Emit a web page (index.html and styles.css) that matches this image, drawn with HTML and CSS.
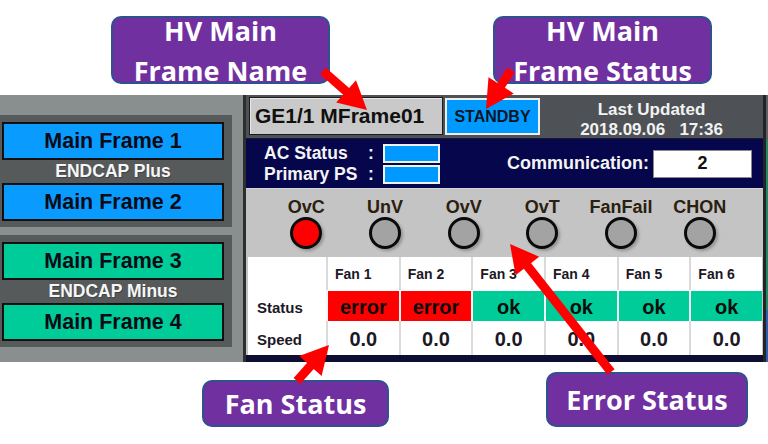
FILE: index.html
```html
<!DOCTYPE html>
<html>
<head>
<meta charset="utf-8">
<title>HV Main Frame</title>
<link rel="stylesheet" href="styles.css">
</head>
<body>
<div class="page">
  <div class="top-space"></div>
  <div class="shot">
    <div class="lp">
      <div class="group">
        <div class="mf blue">Main Frame 1</div>
        <div class="cap">ENDCAP Plus</div>
        <div class="mf blue">Main Frame 2</div>
      </div>
      <div class="group">
        <div class="mf green">Main Frame 3</div>
        <div class="cap">ENDCAP Minus</div>
        <div class="mf green">Main Frame 4</div>
      </div>
    </div>
    <div class="rp">
      <div class="hdr">
        <div class="name">GE1/1 MFrame01</div>
        <div class="standby">STANDBY</div>
        <div class="updated">
          <div>Last Updated</div>
          <div class="date">2018.09.06&nbsp;&nbsp; 17:36</div>
        </div>
      </div>
      <div class="navy">
        <div class="ps">
          <span class="pl">AC Status</span><span class="pc">:</span><span class="pb"></span>
          <span class="pl">Primary PS</span><span class="pc">:</span><span class="pb"></span>
        </div>
        <div class="comm"><span>Communication:</span><div class="cbox">2</div></div>
      </div>
      <div class="ind">
        <div class="led"><span>OvC</span><i class="dot on"></i></div>
        <div class="led"><span>UnV</span><i class="dot"></i></div>
        <div class="led"><span>OvV</span><i class="dot"></i></div>
        <div class="led"><span>OvT</span><i class="dot"></i></div>
        <div class="led"><span>FanFail</span><i class="dot"></i></div>
        <div class="led"><span>CHON</span><i class="dot"></i></div>
      </div>
      <div class="twrap">
        <div class="tbl">
          <div class="lab"></div>
          <div class="fh">Fan 1</div>
          <div class="fh">Fan 2</div>
          <div class="fh">Fan 3</div>
          <div class="fh">Fan 4</div>
          <div class="fh">Fan 5</div>
          <div class="fh">Fan 6</div>
          <div class="lab st">Status</div>
          <div class="fs err">error</div>
          <div class="fs err">error</div>
          <div class="fs ok">ok</div>
          <div class="fs ok">ok</div>
          <div class="fs ok">ok</div>
          <div class="fs ok">ok</div>
          <div class="lab sp">Speed</div>
          <div class="fv">0.0</div>
          <div class="fv">0.0</div>
          <div class="fv">0.0</div>
          <div class="fv">0.0</div>
          <div class="fv">0.0</div>
          <div class="fv">0.0</div>
        </div>
      </div>
      <div class="bbar"></div>
    </div>
    <div class="strip"></div>
  </div>

  <div class="callout c-name"><div class="ct">HV Main<br>Frame Name</div></div>
  <div class="callout c-status"><div class="ct">HV Main<br>Frame Status</div></div>
  <div class="callout c-fan"><div class="ct">Fan Status</div></div>
  <div class="callout c-err"><div class="ct">Error Status</div></div>

  <svg class="arrows" width="768" height="444" viewBox="0 0 768 444">
    <g fill="#ff0000" stroke="#ff0000">
      <line x1="323" y1="71" x2="347.6" y2="92.7" stroke-width="9"/>
      <polygon points="367,110 336.2,102.6 356,80.2" stroke="none"/>
      <line x1="511" y1="70" x2="500" y2="87.1" stroke-width="9"/>
      <polygon points="486,109 488.5,77.3 513.7,93.5" stroke="none"/>
      <line x1="611" y1="372" x2="526.2" y2="264.4" stroke-width="9"/>
      <polygon points="510,244 539.2,256.7 515.6,275.3" stroke="none"/>
      <line x1="297" y1="381" x2="311.7" y2="364.4" stroke-width="9"/>
      <polygon points="329,345 321.6,375.9 299.2,355.9" stroke="none"/>
    </g>
  </svg>
</div>
</body>
</html>
```

FILE: styles.css
```css
* { box-sizing: border-box; }
html, body { margin: 0; padding: 0; background: #ffffff; }
body { font-family: "Liberation Sans", Arial, sans-serif; }

.page {
  position: relative;
  width: 768px;
  height: 444px;
  overflow: hidden;
  background: #ffffff;
  display: flex;
  flex-direction: column;
}
.top-space { height: 95px; flex: none; }
.shot {
  height: 267px;
  flex: none;
  display: flex;
}

/* left panel */
.lp {
  width: 243px;
  flex: none;
  background: #898e8e;
  padding: 20px 11px 0 0;
  display: flex;
  flex-direction: column;
  gap: 8px;
}
.group {
  background: #565a5b;
  padding: 7px 8px 6px 2px;
  display: flex;
  flex-direction: column;
}
.mf {
  height: 38px;
  border: 2px solid #101010;
  display: flex;
  align-items: center;
  justify-content: center;
  font-weight: bold;
  font-size: 21.5px;
  color: #0b0b16;
}
.mf.blue { background: #0a9bff; }
.mf.green { background: #00cc99; }
.cap {
  height: 23px;
  display: flex;
  align-items: center;
  justify-content: center;
  font-weight: bold;
  font-size: 17.5px;
  color: #f6f6f6;
  text-shadow: 1px 1px 0 rgba(0,0,0,0.25);
}

/* right panel */
.rp {
  width: 523px;
  flex: none;
  border-left: 3px solid #2c2e30;
  border-right: 3px solid #222426;
  display: flex;
  flex-direction: column;
}
.strip {
  width: 2px;
  flex: none;
  background: linear-gradient(to bottom, #5c6064 0 45px, #1c8a66 45px 215px, #2a5fb8 215px);
}

.hdr {
  height: 43px;
  background: #4e5256;
  display: flex;
  align-items: flex-start;
  padding: 2px 0 0 3px;
}
.name {
  width: 194px;
  height: 38px;
  border: 1px solid #1c1c1c;
  background: #c9c9c9;
  box-shadow: inset 1px 1px 0 #e6e6e6;
  display: flex;
  align-items: center;
  padding-left: 5px;
  font-weight: bold;
  font-size: 21px;
  color: #101010;
}
.standby {
  margin: 1px 0 0 2px;
  width: 95px;
  height: 37px;
  border: 2px solid #eeeeee;
  background: #0099ff;
  display: flex;
  align-items: center;
  justify-content: center;
  font-weight: bold;
  font-size: 16px;
  color: #0a1626;
}
.updated {
  flex: 1;
  padding-top: 3px;
  text-align: center;
  color: #f2f2f2;
  font-weight: bold;
  font-size: 17px;
  line-height: 20px;
}

.navy {
  height: 50px;
  background: #06064c;
  border-top: 1px solid #1a1a2a;
  display: flex;
  justify-content: space-between;
  padding: 4px 11px 0 18px;
}
.ps {
  display: grid;
  grid-template-columns: 102px 17px 57px;
  grid-template-rows: 20px 20px;
  row-gap: 1px;
  align-items: center;
  color: #f4f4f4;
  font-weight: bold;
  font-size: 17.5px;
}
.pc { padding-left: 2px; }
.pb {
  height: 19px;
  border: 2px solid #f0f0f0;
  background: #0099ff;
}
.comm {
  align-self: center;
  margin-top: -4px;
  display: flex;
  align-items: center;
  gap: 4px;
  color: #f4f4f4;
  font-weight: bold;
  font-size: 18px;
}
.cbox {
  width: 99px;
  height: 28px;
  background: #ffffff;
  border: 1px solid #8a8a8a;
  display: flex;
  align-items: center;
  justify-content: center;
  color: #101010;
  font-size: 18px;
}

.ind {
  height: 67px;
  background: #c4c4c4;
  border-top: 1px solid #d6d6d6;
  display: grid;
  grid-template-columns: repeat(6, 1fr);
  padding: 8px 24px 0 21px;
}
.led {
  display: flex;
  flex-direction: column;
  align-items: center;
}
.led span {
  font-weight: bold;
  font-size: 18px;
  line-height: 20px;
  color: #2b200e;
}
.dot {
  display: block;
  width: 32px;
  height: 32px;
  border-radius: 50%;
  border: 3px solid #0a0a0a;
  background: #a3a3a3;
  box-shadow: 2px 2px 3px rgba(0,0,0,0.25);
}
.dot.on { background: #ff0000; }

.twrap {
  background: #c4c4c4;
  padding: 2px 1px 0 2px;
}
.tbl {
  height: 98px;
  background: #ffffff;
  display: grid;
  grid-template-columns: 78px repeat(6, 1fr);
  grid-template-rows: 33px 31px 34px;
  color: #1c1826;
}
.lab {
  display: flex;
  align-items: center;
  padding-left: 9px;
  font-weight: bold;
  font-size: 15px;
}
.lab.st { padding-top: 4px; }
.lab.sp { padding-top: 3px; }
.fh {
  border-left: 2px solid #dadada;
  display: flex;
  align-items: center;
  padding-left: 7px;
  font-weight: bold;
  font-size: 14px;
}
.fs {
  border-left: 2px solid #f4f4f4;
  border-top: 1px solid #ffffff;
  display: flex;
  align-items: center;
  justify-content: center;
  padding-top: 3px;
  font-weight: bold;
  font-size: 20px;
  color: #0c0c0c;
}
.fs.err { background: #ff0000; }
.fs.ok { background: #00cc99; }
.fv {
  border-left: 2px solid #dadada;
  display: flex;
  align-items: center;
  justify-content: center;
  padding-top: 3px;
  font-weight: bold;
  font-size: 20px;
}
.bbar {
  height: 7px;
  background: #0e0e34;
}

/* annotation callouts */
.callout {
  position: absolute;
  background: #7030a0;
  border: 2px solid #2f528f;
  border-radius: 10px;
  display: flex;
  align-items: center;
  justify-content: center;
  color: #ffffff;
  font-family: "Open Sans", "Liberation Sans", sans-serif;
  font-weight: bold;
  font-size: 27px;
  text-align: center;
}
.callout .ct { line-height: 40px; white-space: nowrap; }
.c-name { left: 111px; top: 16px; width: 219px; height: 68px; }
.c-status { left: 493px; top: 16px; width: 219px; height: 68px; }
.c-name .ct, .c-status .ct { margin-top: 2px; }
.c-fan { left: 202px; top: 380px; width: 187px; height: 47px; }
.c-err { left: 546px; top: 372px; width: 202px; height: 55px; }

.arrows {
  position: absolute;
  left: 0;
  top: 0;
  pointer-events: none;
}
```
